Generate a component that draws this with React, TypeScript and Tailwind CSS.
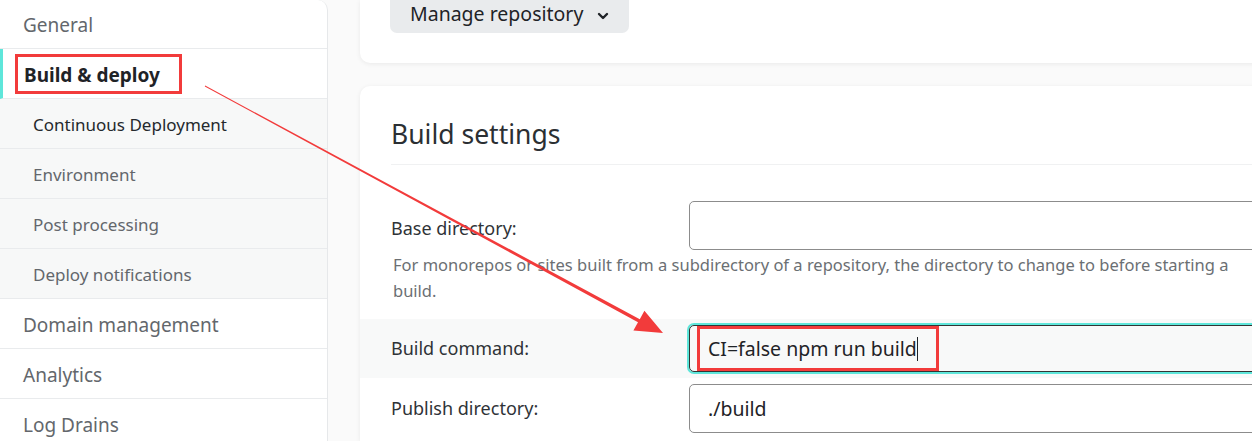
const topItems = ["Domain management", "Analytics", "Log Drains"];
const subItems = ["Environment", "Post processing", "Deploy notifications"];

function Sidebar() {
  return (
    <aside className="w-[328px] shrink-0 h-full bg-white border-r border-[#e6e8ea] rounded-tr-[10px]">
      <div className="h-[49px] border-b border-[#e9ebed] flex items-center pl-[23px] pt-[3px] text-[19px] text-[#63676c]">
        General
      </div>
      <div className="h-[50px] border-b border-[#e9ebed] border-l-[3px] border-l-[#5ee6da] flex items-center pl-[12px] pt-[1px]">
        <span className="inline-flex items-center h-[40px] border-[3px] border-[#f23b3b] pl-[6px] pr-[19px] pt-[2px] text-[19px] font-bold text-[#1f2327]">
          Build &amp; deploy
        </span>
      </div>
      <div className="h-[50px] border-b border-[#e9ebed] bg-[#f7f8f8] flex items-center pl-[33px] pt-[2px] text-[17px] text-[#25292d]">
        Continuous Deployment
      </div>
      {subItems.map((s) => (
        <div
          key={s}
          className="h-[50px] border-b border-[#e9ebed] bg-[#f7f8f8] flex items-center pl-[33px] pt-[2px] text-[17px] text-[#63676c]"
        >
          {s}
        </div>
      ))}
      {topItems.map((s) => (
        <div
          key={s}
          className="h-[50px] border-b border-[#e9ebed] flex items-center pl-[23px] pt-[3px] text-[19px] text-[#63676c]"
        >
          {s}
        </div>
      ))}
    </aside>
  );
}

function Arrow() {
  return (
    <svg className="absolute top-0 left-0 pointer-events-none" width="1252" height="441">
      <polygon
        fill="#f23b3b"
        points="205.2,85.6 639.8,319.2 644.4,310.8 663,333 633.4,330.4 638,322.2 204.8,86.4"
      />
    </svg>
  );
}

export default function App() {
  return (
    <div className="relative w-[1252px] h-[441px] overflow-hidden bg-[#fafafa] flex font-['Noto_Sans',sans-serif]">
      <Sidebar />
      <main className="ml-[32px] w-[940px] shrink-0 flex flex-col gap-[23px]">
        <div className="h-[63px] bg-white rounded-b-[10px] shadow-[0_1px_5px_rgba(0,0,0,0.07)] px-[30px]">
          <button className="h-[33px] bg-[#e9ebed] rounded-b-[7px] pl-[20px] pr-[20px] pb-[5px] flex items-center gap-[14px] text-[19.5px] text-[#1f2327]">
            Manage repository
            <svg width="12" height="8" viewBox="0 0 12 8" className="mt-[3px]">
              <path d="M2 2l4 4 4-4" fill="none" stroke="#1f2327" strokeWidth="2.4" strokeLinecap="round" strokeLinejoin="round" />
            </svg>
          </button>
        </div>
        <section className="bg-white rounded-t-[10px] shadow-[0_1px_5px_rgba(0,0,0,0.07)] flex-1">
          <div className="px-[31px]">
            <h2 className="pt-[31px] pb-[13px] text-[26.5px] leading-[34px] text-[#2b2f33] border-b border-[#f0f1f2]">
              Build settings
            </h2>
          </div>
          <div className="px-[31px] pt-[36px] flex items-center">
            <label className="w-[298px] shrink-0 text-[18px] text-[#2f3337] pt-[5px]">Base directory:</label>
            <div className="flex-1 h-[49px] border border-[#8c8c8c] rounded-[5px]"></div>
          </div>
          <p className="pl-[33px] w-[880px] mt-[2px] text-[16.5px] leading-[26px] text-[#6b6f73]">
            For monorepos or sites built from a subdirectory of a repository, the directory to change to before starting a build.
          </p>
          <div className="mt-[15px] bg-[#f8f9f9] px-[31px] py-[6px] flex items-center">
            <label className="w-[298px] shrink-0 text-[18px] text-[#2f3337]">Build command:</label>
            <div className="flex-1 h-[47px] border border-[#333] rounded-[5px] ring-2 ring-[#5ee6da] flex items-center pl-[7px]">
              <span className="inline-flex items-center h-[45px] border-[3px] border-[#f23b3b] pl-[8px] pr-[18px] text-[19.5px] text-[#1f2327]">
                CI=false npm run build
                <span className="inline-block w-px h-[24px] bg-[#1f2327]"></span>
              </span>
            </div>
          </div>
          <div className="px-[31px] py-[6px] flex items-center">
            <label className="w-[298px] shrink-0 text-[18px] text-[#2f3337]">Publish directory:</label>
            <div className="flex-1 h-[49px] border border-[#8c8c8c] rounded-[5px] flex items-center pl-[18px] text-[19.5px] text-[#1f2327]">
              ./build
            </div>
          </div>
        </section>
      </main>
      <Arrow />
    </div>
  );
}
